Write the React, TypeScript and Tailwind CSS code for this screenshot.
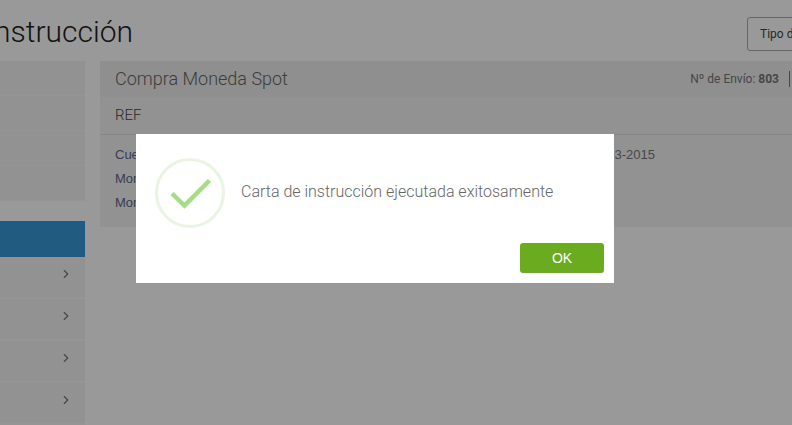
import { ChevronRight } from "lucide-react";

const summaryRows = [0, 1, 2, 3];
const menuRows = [0, 1, 2, 3];
const details = [
  { label: "Cuenta", value: "03-2015" },
  { label: "Moneda", value: "" },
  { label: "Monto", value: "" },
];

function Sidebar() {
  return (
    <aside className="w-[85px] shrink-0">
      <ul className="mb-5">
        {summaryRows.map((row) => (
          <li key={row} className="h-[35px] border-b border-[#f8f8f8] bg-[#f3f3f3]" />
        ))}
      </ul>
      <nav>
        <div className="h-9 bg-[#3898d5]" />
        {menuRows.map((row) => (
          <button
            key={row}
            type="button"
            aria-label="Abrir"
            className="flex h-[42px] w-full items-start justify-end border-b-2 border-[#f8f8f8] bg-[#f3f3f3] pt-2.5 pr-3"
          >
            <ChevronRight size={14} strokeWidth={2} className="text-[#777]" />
          </button>
        ))}
      </nav>
    </aside>
  );
}

function OrderPanel() {
  return (
    <section className="min-w-0 flex-1 self-start bg-[#f4f4f4]">
      <header className="flex h-9 items-center bg-[#efefef] pl-[15px]">
        <h2 className="flex-1 text-lg font-light text-[#666]">Compra Moneda Spot</h2>
        <p className="text-xs text-[#777]">
          Nº de Envío: <strong className="font-bold">803</strong>
        </p>
        <span className="mr-0.5 ml-2.5 h-4 w-px bg-[#777]" />
      </header>
      <h3 className="flex h-[38px] items-center border-b border-[#e0e0e0] pl-[15px] text-[15px] font-light text-[#444]">
        REF
      </h3>
      <dl className="pt-2 pb-3 pl-[15px] font-['Liberation_Sans',Arial,sans-serif] text-[13px] leading-6">
        {details.map((item) => (
          <div key={item.label} className="flex h-6 justify-between pr-[137px]">
            <dt className="text-[#5f6688]">{item.label}</dt>
            <dd className="text-[#777]">{item.value}</dd>
          </div>
        ))}
      </dl>
    </section>
  );
}

function SuccessDialog() {
  return (
    <div className="fixed inset-0 flex items-center justify-center bg-black/40 pr-[42px] pb-2">
      <div
        role="alertdialog"
        aria-modal="true"
        aria-describedby="dialog-message"
        className="w-[478px] bg-white px-2.5 pt-6 pb-2.5"
      >
        <div className="flex items-center gap-4 pl-[9px]">
          <svg width="70" height="70" viewBox="0 0 70 70" fill="none" aria-hidden="true">
            <circle cx="35" cy="35" r="33.5" stroke="#e8f5e1" strokeWidth="3" />
            <path d="M17 35.5 29.5 47.5 54.5 22.5" stroke="#a5dc86" strokeWidth="4.5" />
          </svg>
          <p id="dialog-message" className="pb-0.5 text-base leading-6 font-light text-[#666]">
            Carta de instrucción ejecutada exitosamente
          </p>
        </div>
        <div className="mt-[15px] flex justify-end">
          <button
            type="button"
            className="h-[30px] w-[84px] rounded-[3px] bg-[#6aab20] font-['Liberation_Sans',Arial,sans-serif] text-sm text-white"
          >
            OK
          </button>
        </div>
      </div>
    </div>
  );
}

export default function App() {
  return (
    <div className="min-h-screen overflow-hidden bg-white font-[Roboto,sans-serif]">
      <header className="flex h-[61px] justify-between">
        <div className="flex w-[133px] justify-end overflow-hidden pt-3">
          <h1 className="text-3xl leading-10 font-light text-[#222]">Instrucción</h1>
        </div>
        <div className="w-[45px] pt-[17px]">
          <select
            aria-label="Tipo"
            className="h-[34px] w-[140px] appearance-none rounded-[3px] border border-[#aaa] bg-white px-3 text-xs text-[#444]"
          >
            <option>Tipo de</option>
          </select>
        </div>
      </header>
      <main className="flex gap-[15px]">
        <Sidebar />
        <OrderPanel />
      </main>
      <SuccessDialog />
    </div>
  );
}
